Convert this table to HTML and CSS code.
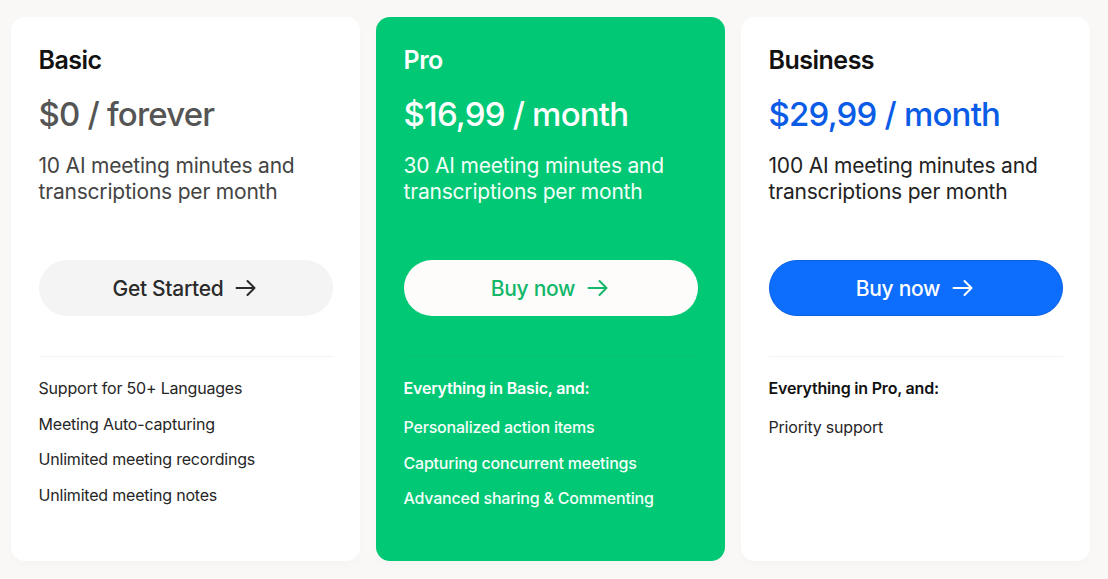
FILE: index.html
```html
<!DOCTYPE html>
<html lang="en">
<head>
<meta charset="utf-8">
<title>Pricing</title>
<link rel="stylesheet" href="styles.css">
</head>
<body>
<main class="plans">
  <section class="card card-basic">
    <h2 class="plan-name">Basic</h2>
    <p class="price">$0 / forever</p>
    <p class="desc">10 AI meeting minutes and transcriptions per month</p>
    <a class="btn btn-basic" href="#">Get Started
      <svg class="arrow" viewBox="0 0 24 24" width="24" height="24"><path d="M2.5 12h18M13.5 5l7 7-7 7"/></svg>
    </a>
    <hr class="divider">
    <ul class="features">
      <li>Support for 50+ Languages</li>
      <li>Meeting Auto-capturing</li>
      <li>Unlimited meeting recordings</li>
      <li>Unlimited meeting notes</li>
    </ul>
  </section>
  <section class="card card-pro">
    <h2 class="plan-name">Pro</h2>
    <p class="price">$16,99 / month</p>
    <p class="desc">30 AI meeting minutes and transcriptions per month</p>
    <a class="btn btn-pro" href="#">Buy now
      <svg class="arrow" viewBox="0 0 24 24" width="24" height="24"><path d="M2.5 12h18M13.5 5l7 7-7 7"/></svg>
    </a>
    <hr class="divider">
    <ul class="features">
      <li class="feature-head">Everything in Basic, and:</li>
      <li>Personalized action items</li>
      <li>Capturing concurrent meetings</li>
      <li>Advanced sharing &amp; Commenting</li>
    </ul>
  </section>
  <section class="card card-business">
    <h2 class="plan-name">Business</h2>
    <p class="price">$29,99 / month</p>
    <p class="desc">100 AI meeting minutes and transcriptions per month</p>
    <a class="btn btn-business" href="#">Buy now
      <svg class="arrow" viewBox="0 0 24 24" width="24" height="24"><path d="M2.5 12h18M13.5 5l7 7-7 7"/></svg>
    </a>
    <hr class="divider">
    <ul class="features">
      <li class="feature-head">Everything in Pro, and:</li>
      <li>Priority support</li>
    </ul>
  </section>
</main>
</body>
</html>
```

FILE: styles.css
```css
* { box-sizing: border-box; }
html, body { margin: 0; padding: 0; }
body {
  background: #f9f8f6;
  font-family: Inter, "Noto Sans", sans-serif;
  color: #1a1a1a;
}
.plans {
  display: grid;
  grid-template-columns: repeat(3, 349px);
  column-gap: 16px;
  padding: 17px 18px 18px 11px;
}
.card {
  height: 544px;
  border-radius: 14px;
  background: #ffffff;
  padding: 23px 27.5px 0 27.5px;
  display: flex;
  flex-direction: column;
  box-shadow: 0 4px 10px rgba(0, 0, 0, 0.015);
}
.card-pro {
  background: #00c875;
  color: #ffffff;
}
.plan-name {
  margin: 0;
  font-size: 25px;
  line-height: 40px;
  font-weight: 600;
  letter-spacing: -0.5px;
  color: #111;
}
.card-pro .plan-name { color: #fff; }
.price {
  margin: 10px 0 0;
  font-size: 33px;
  line-height: 48px;
  font-weight: 500;
  letter-spacing: -0.8px;
  color: #555;
}
.card-basic .price { font-weight: 450; }
.card-pro .price { color: #fff; }
.card-business .price { color: #0a5ce6; }
.desc {
  margin: 15px 0 0;
  font-size: 21px;
  line-height: 26px;
  letter-spacing: -0.2px;
  color: #444;
  height: 52px;
}
.card-pro .desc { color: #f2fff8; }
.card-business .desc { color: #222; }
.btn {
  margin-top: 55px;
  height: 56px;
  border-radius: 28px;
  display: flex;
  align-items: center;
  justify-content: center;
  gap: 11px;
  font-size: 21px;
  font-weight: 500;
  letter-spacing: -0.3px;
  text-decoration: none;
}
.arrow {
  fill: none;
  stroke: currentColor;
  stroke-width: 2;
  stroke-linecap: round;
  stroke-linejoin: round;
}
.btn-basic { background: #f4f4f4; color: #2a2a2a; }
.btn-pro { background: #fdfcfa; color: #12b76a; }
.btn-business { background: #0d6efd; color: #fff; border: 1px solid #0a5fe0; }
.divider {
  margin: 40px 0 0;
  border: 0;
  height: 1px;
  background: #f3f2ef;
}
.card-pro .divider { background: #04c271; }
.features {
  list-style: none;
  margin: 19px 0 0;
  padding: 0;
  display: flex;
  flex-direction: column;
  gap: 11.5px;
  font-size: 16px;
  line-height: 24px;
  letter-spacing: -0.2px;
  color: #262626;
}
.card-pro .features { color: #f4fff9; font-weight: 500; }
.feature-head {
  font-weight: 600;
  color: #111;
  margin-bottom: 3.5px;
}
.card-pro .feature-head { color: #fff; }
```
